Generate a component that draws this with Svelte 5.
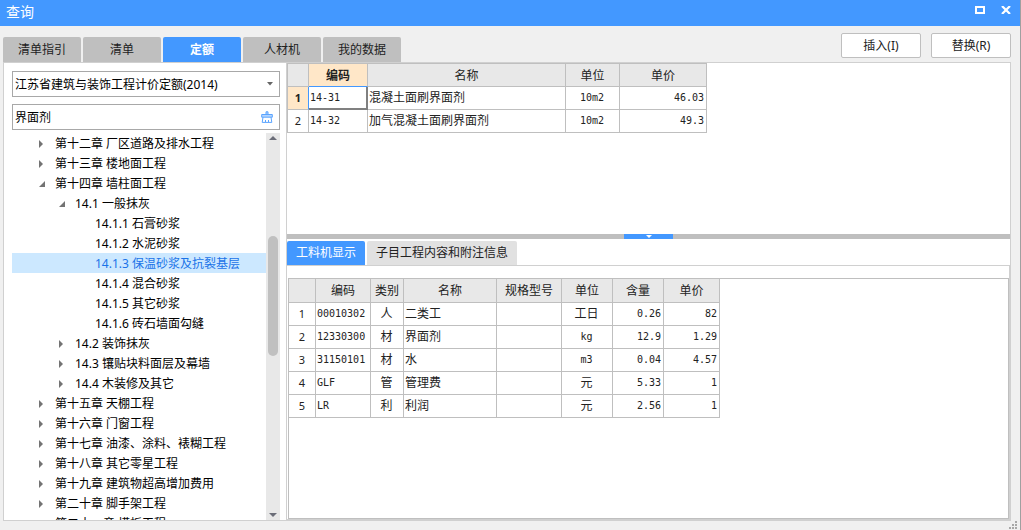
<script>
  const tabs = ["清单指引", "清单", "定额", "人材机", "我的数据"];
  let activeTab = "定额";

  const detailTabs = ["工料机显示", "子目工程内容和附注信息"];
  let activeDetail = "工料机显示";

  let keyword = "界面剂";
  let selected = "14.1.3 保温砂浆及抗裂基层";

  // state: closed / open / leaf
  const tree = [
    { name: "第十二章 厂区道路及排水工程", level: 1, state: "closed" },
    { name: "第十三章 楼地面工程", level: 1, state: "closed" },
    { name: "第十四章 墙柱面工程", level: 1, state: "open" },
    { name: "14.1 一般抹灰", level: 2, state: "open" },
    { name: "14.1.1 石膏砂浆", level: 3, state: "leaf" },
    { name: "14.1.2 水泥砂浆", level: 3, state: "leaf" },
    { name: "14.1.3 保温砂浆及抗裂基层", level: 3, state: "leaf" },
    { name: "14.1.4 混合砂浆", level: 3, state: "leaf" },
    { name: "14.1.5 其它砂浆", level: 3, state: "leaf" },
    { name: "14.1.6 砖石墙面勾缝", level: 3, state: "leaf" },
    { name: "14.2 装饰抹灰", level: 2, state: "closed" },
    { name: "14.3 镶贴块料面层及幕墙", level: 2, state: "closed" },
    { name: "14.4 木装修及其它", level: 2, state: "closed" },
    { name: "第十五章 天棚工程", level: 1, state: "closed" },
    { name: "第十六章 门窗工程", level: 1, state: "closed" },
    { name: "第十七章 油漆、涂料、裱糊工程", level: 1, state: "closed" },
    { name: "第十八章 其它零星工程", level: 1, state: "closed" },
    { name: "第十九章 建筑物超高增加费用", level: 1, state: "closed" },
    { name: "第二十章 脚手架工程", level: 1, state: "closed" },
    { name: "第二十一章 模板工程", level: 1, state: "closed" }
  ];

  const quotas = [
    { code: "14-31", name: "混凝土面刷界面剂", unit: "10m2", price: "46.03" },
    { code: "14-32", name: "加气混凝土面刷界面剂", unit: "10m2", price: "49.3" }
  ];
  let currentQuota = 0;

  const resources = [
    { code: "00010302", type: "人", name: "二类工", spec: "", unit: "工日", amount: "0.26", price: "82" },
    { code: "12330300", type: "材", name: "界面剂", spec: "", unit: "kg", amount: "12.9", price: "1.29" },
    { code: "31150101", type: "材", name: "水", spec: "", unit: "m3", amount: "0.04", price: "4.57" },
    { code: "GLF", type: "管", name: "管理费", spec: "", unit: "元", amount: "5.33", price: "1" },
    { code: "LR", type: "利", name: "利润", spec: "", unit: "元", amount: "2.56", price: "1" }
  ];

  // latin units use the narrow grid font
  const isLatin = (text) => /^[a-z0-9]+$/i.test(text);
</script>

<div class="window">
  <header class="titlebar">
    <h1>查询</h1>
    <button aria-label="最大化">
      <svg width="10" height="8" viewBox="0 0 10 8"><rect x="1" y="1" width="8" height="6" fill="none" stroke="#fff" stroke-width="2" /></svg>
    </button>
    <button aria-label="关闭">
      <svg width="10" height="8" viewBox="0 0 10 8"><path d="M1 0 L9 8 M9 0 L1 8" stroke="#fff" stroke-width="2.2" /></svg>
    </button>
  </header>

  <div class="toolbar">
    <nav class="tabs">
      {#each tabs as tab}
        <button class:active={activeTab === tab} on:click={() => (activeTab = tab)}>{tab}</button>
      {/each}
    </nav>
    <div class="actions">
      <button>插入(I)</button>
      <button>替换(R)</button>
    </div>
  </div>

  <main>
    <aside>
      <div class="field">
        <select aria-label="定额库">
          <option>江苏省建筑与装饰工程计价定额(2014)</option>
        </select>
        <svg class="caret" width="6" height="4" viewBox="0 0 6 4"><path d="M0 0 H6 L3 3.5 Z" fill="#666" /></svg>
      </div>
      <div class="field">
        <input aria-label="关键字" bind:value={keyword} />
        <button class="clear" aria-label="清空" on:click={() => (keyword = "")}>
          <svg width="12" height="12" viewBox="0 0 12 12" fill="none" stroke="#5aa4ff">
            <path d="M5 3.5 V0.8 H7 V3.5" fill="#b4d6ff" />
            <path d="M0.7 6.2 V3.5 H11.3 V6.2 Z" fill="#b4d6ff" />
            <path d="M2 6.2 L1.2 11.4 H10.8 L10 6.2" />
            <path d="M4.5 11 V9 M7.5 11 V9" />
          </svg>
        </button>
      </div>

      <div class="tree-box">
        <ul class="tree">
          {#each tree as node}
            <li>
              <button
                class="node level{node.level}"
                class:selected={selected === node.name}
                on:click={() => (selected = node.name)}
              >
                <svg width="12" height="10" viewBox="0 0 12 10">
                  {#if node.state === "closed"}
                    <path d="M3 1 L7 5 L3 9 Z" fill="#737373" />
                  {:else if node.state === "open"}
                    <path d="M9 2 V8 H3 Z" fill="#737373" />
                  {/if}
                </svg>
                <span>{node.name}</span>
              </button>
            </li>
          {/each}
        </ul>
        <div class="scrollbar">
          <svg width="8" height="4" viewBox="0 0 8 4"><path d="M0 4 L4 0 L8 4 Z" fill="#6b6d78" /></svg>
          <div class="track"><div class="thumb"></div></div>
          <svg width="8" height="4" viewBox="0 0 8 4"><path d="M0 0 H8 L4 4 Z" fill="#6b6d78" /></svg>
        </div>
      </div>
    </aside>

    <section class="content">
      <div class="quota-list">
        <table class="quotas">
          <colgroup>
            <col class="q-no" /><col class="q-code" /><col class="q-name" /><col class="q-unit" /><col class="q-price" />
          </colgroup>
          <thead>
            <tr>
              <th></th>
              <th class="current">编码</th>
              <th>名称</th>
              <th>单位</th>
              <th>单价</th>
            </tr>
          </thead>
          <tbody>
            {#each quotas as row, i}
              <tr on:click={() => (currentQuota = i)}>
                <th class:current={currentQuota === i}>{i + 1}</th>
                <td class="mono" class:cursor={currentQuota === i}>{row.code}</td>
                <td>{row.name}</td>
                <td class="mono center">{row.unit}</td>
                <td class="mono right">{row.price}</td>
              </tr>
            {/each}
          </tbody>
        </table>
      </div>

      <div class="splitter">
        <button aria-label="收起">
          <svg width="6" height="3" viewBox="0 0 6 3"><path d="M0 0 H6 L3 3 Z" fill="#fff" /></svg>
        </button>
      </div>

      <nav class="detail-tabs">
        {#each detailTabs as tab}
          <button class:active={activeDetail === tab} on:click={() => (activeDetail = tab)}>{tab}</button>
        {/each}
      </nav>

      <div class="detail">
        <div class="detail-grid">
          <table class="resources">
            <colgroup>
              <col class="r-no" /><col class="r-code" /><col class="r-type" /><col class="r-name" />
              <col class="r-spec" /><col class="r-unit" /><col class="r-amount" /><col class="r-price" />
            </colgroup>
            <thead>
              <tr>
                <th></th>
                <th>编码</th>
                <th>类别</th>
                <th>名称</th>
                <th>规格型号</th>
                <th>单位</th>
                <th>含量</th>
                <th>单价</th>
              </tr>
            </thead>
            <tbody>
              {#each resources as row, i}
                <tr>
                  <th>{i + 1}</th>
                  <td class="mono">{row.code}</td>
                  <td class="center">{row.type}</td>
                  <td>{row.name}</td>
                  <td>{row.spec}</td>
                  <td class="center" class:mono={isLatin(row.unit)}>{row.unit}</td>
                  <td class="mono right">{row.amount}</td>
                  <td class="mono right">{row.price}</td>
                </tr>
              {/each}
            </tbody>
          </table>
        </div>
      </div>
    </section>
  </main>

  <svg class="grip" width="8" height="8" viewBox="0 0 8 8" fill="#a8a8a8">
    <path d="M6 0h2v2h-2z M3 3h2v2h-2z M6 3h2v2h-2z M0 6h2v2h-2z M3 6h2v2h-2z M6 6h2v2h-2z" />
  </svg>
</div>

<style>
  :global(body) {
    margin: 0;
  }
  .window, .window * {
    box-sizing: border-box;
  }
  .window {
    position: relative;
    display: flex;
    flex-direction: column;
    height: 100vh;
    background: #f0f0f0;
    border-right: 1px solid #a0a0a0;
    font-family: "Noto Sans", "Noto Sans CJK SC", sans-serif;
    font-size: 12px;
    line-height: 20px;
    color: #000;
  }
  button, input, select {
    font: inherit;
    color: inherit;
    margin: 0;
    padding: 0;
    border: none;
    background: none;
  }
  svg {
    display: block;
    flex: none;
  }

  /* Title bar */
  .titlebar {
    display: flex;
    align-items: center;
    gap: 16px;
    height: 26px;
    padding: 0 9px 0 6px;
    background: #4398ff;
    color: #fff;
  }
  .titlebar h1 {
    flex: 1;
    margin: 0;
    padding-bottom: 2px;
    font-size: 14px;
    font-weight: 400;
  }
  .titlebar button {
    padding-bottom: 6px;
  }

  /* Tabs and buttons */
  .toolbar {
    display: flex;
    justify-content: space-between;
    align-items: flex-end;
    height: 36px;
    padding: 0 9px 0 3px;
  }
  .tabs {
    display: flex;
    gap: 2px;
  }
  .tabs button {
    width: 78px;
    height: 25px;
    background: #bfbfbf;
    border-radius: 2px 2px 0 0;
    color: #222;
  }
  .tabs button.active {
    background: #4398ff;
    color: #fff;
    font-weight: 700;
  }
  .actions {
    display: flex;
    gap: 10px;
    padding-bottom: 4px;
  }
  .actions button {
    width: 80px;
    height: 25px;
    background: #fff;
    border: 1px solid #bfbfbf;
    border-radius: 2px;
    color: #222;
  }

  main {
    flex: 1;
    display: flex;
    min-height: 0;
    margin: 0 9px 9px 3px;
    background: #fff;
    border: 1px solid #d0d0d0;
  }

  /* Left side */
  aside {
    display: flex;
    flex-direction: column;
    width: 283px;
    flex: none;
    padding: 8px 6px 0 8px;
    border-right: 1px solid #d0d0d0;
  }
  .field {
    display: flex;
    align-items: center;
    flex: none;
    height: 26px;
    margin-bottom: 7px;
    padding: 0 6px 0 2px;
    border: 1px solid #a8a8a8;
  }
  .field select, .field input {
    flex: 1;
    min-width: 0;
    height: 24px;
    appearance: none;
    outline: none;
  }
  .field select {
    padding-top: 2px;
  }
  .tree-box {
    flex: 1;
    display: flex;
    min-height: 0;
    margin-top: -4px;
  }
  .tree {
    flex: 1;
    margin: 0;
    padding: 0;
    list-style: none;
    overflow: hidden;
  }
  .node {
    display: flex;
    align-items: center;
    gap: 7px;
    width: 100%;
    height: 20px;
    padding-top: 2px;
    white-space: nowrap;
  }
  .level1 {
    padding-left: 24px;
  }
  .level2 {
    padding-left: 44px;
  }
  .level3 {
    padding-left: 64px;
  }
  .node.selected {
    background: #cce8ff;
    color: #1a73e8;
  }
  .scrollbar {
    display: flex;
    flex-direction: column;
    align-items: center;
    width: 14px;
    padding: 3px 0;
    background: #e8e8e8;
  }
  .track {
    flex: 1;
    width: 10px;
    padding-top: 96px;
  }
  .thumb {
    height: 120px;
    background: #c0c0c0;
    border-radius: 5px;
  }

  /* Grids */
  .content {
    flex: 1;
    display: flex;
    flex-direction: column;
    min-width: 0;
  }
  table {
    table-layout: fixed;
    border-collapse: separate;
    border-spacing: 0;
    border-left: 1px solid #bfbfbf;
    color: #222;
    line-height: 18px;
  }
  th, td {
    height: 23px;
    padding: 0 2px 1px 1px;
    border-right: 1px solid #bfbfbf;
    border-bottom: 1px solid #bfbfbf;
    font-weight: 400;
    text-align: left;
    white-space: nowrap;
    overflow: hidden;
  }
  th {
    padding: 0;
    text-align: center;
  }
  thead th {
    height: 24px;
    background: #e8e8e8;
    border-top: 1px solid #bfbfbf;
  }
  tbody th {
    font-size: 11px;
  }
  .mono {
    font-family: "DejaVu Sans Mono", "Noto Sans CJK SC", monospace;
    font-size: 10px;
  }
  .center {
    text-align: center;
  }
  .right {
    text-align: right;
  }
  th.current {
    background: #ffe7c8;
    font-weight: 700;
  }
  thead th.current {
    border-bottom-color: #4398ff;
  }
  tbody th.current {
    border-right-color: #4398ff;
  }
  td.cursor {
    border-right-color: #808080;
    border-bottom-color: #808080;
    box-shadow: inset -1px -1px #808080;
  }
  .quotas {
    width: 420px;
  }
  .quotas thead th {
    padding-top: 1px;
  }
  .q-no { width: 21px; }
  .q-code { width: 59px; }
  .q-name { width: 198px; }
  .q-unit { width: 54px; }
  .q-price { width: 87px; }
  .resources {
    width: 431px;
    border-left: none;
  }
  .resources thead th {
    border-top: none;
  }
  .r-no { width: 27px; }
  .r-code { width: 55px; }
  .r-type { width: 33px; }
  .r-name { width: 93px; }
  .r-spec { width: 65px; }
  .r-unit { width: 51px; }
  .r-amount { width: 51px; }
  .r-price { width: 56px; }

  .quota-list {
    height: 171px;
    flex: none;
    overflow: hidden;
  }
  .splitter {
    display: flex;
    justify-content: center;
    flex: none;
    height: 5px;
    background: #bfbfbf;
  }
  .splitter button {
    display: flex;
    align-items: center;
    justify-content: center;
    width: 49px;
    background: #4398ff;
  }

  /* Lower panel */
  .detail-tabs {
    display: flex;
    gap: 2px;
    flex: none;
    padding-top: 2px;
  }
  .detail-tabs button {
    height: 24px;
    padding: 0 9px;
    background: #e1e1e1;
    border-radius: 2px 2px 0 0;
    color: #222;
  }
  .detail-tabs button.active {
    background: #4398ff;
    color: #fff;
  }
  .detail {
    flex: 1;
    display: flex;
    min-height: 0;
    padding-top: 12px;
    border: 1px solid #d0d0d0;
    border-left: none;
  }
  .detail-grid {
    flex: 1;
    margin-left: 1px;
    border: 1px solid #bfbfbf;
    overflow: hidden;
  }

  .grip {
    position: absolute;
    right: 3px;
    bottom: 1px;
  }
</style>
